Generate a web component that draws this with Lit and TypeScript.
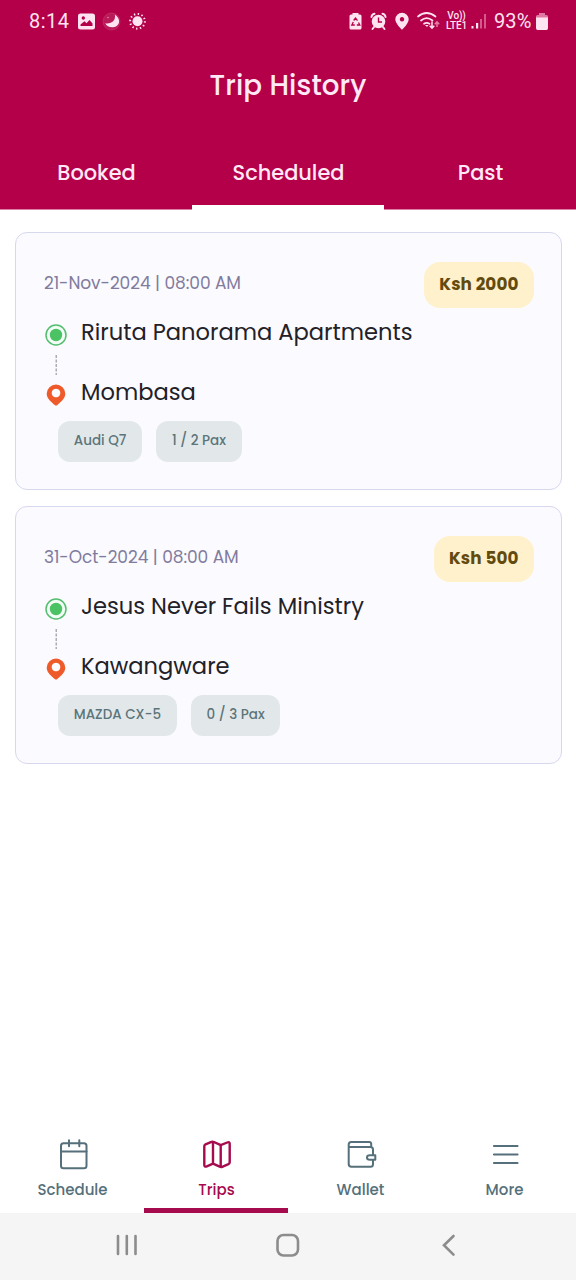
import { LitElement, html, css, svg } from "lit";
import { customElement, property } from "lit/decorators.js";
import { classMap } from "lit/directives/class-map.js";

interface Trip {
  date: string;
  price: string;
  from: string;
  to: string;
  car: string;
  pax: string;
}

const trips: Trip[] = [
  { date: "21-Nov-2024 | 08:00 AM", price: "Ksh 2000", from: "Riruta Panorama Apartments", to: "Mombasa", car: "Audi Q7", pax: "1 / 2 Pax" },
  { date: "31-Oct-2024 | 08:00 AM", price: "Ksh 500", from: "Jesus Never Fails Ministry", to: "Kawangware", car: "MAZDA CX-5", pax: "0 / 3 Pax" },
];

@customElement("status-bar")
class StatusBar extends LitElement {
  static styles = css`
    :host { display: flex; height: 42px; padding: 0 28px 0 29px; box-sizing: border-box; align-items: center; justify-content: space-between; color: #ffe3f1; font-family: Roboto, sans-serif; }
    .left { display: flex; align-items: center; }
    .time { font-size: 20px; line-height: 42px; letter-spacing: 0.5px; width: 49px; }
    svg { display: block; }
    .right { display: flex; align-items: center; }
    .volte { display: flex; flex-direction: column; font-size: 10px; line-height: 9.500px; font-weight: 500; letter-spacing: -0.15px; width: 21px; align-items: center; margin: 0 4px 1px 5px; }
    .pct { font-size: 20px; line-height: 42px; margin-left: 8px; width: 42px; letter-spacing: 0.1px; }
  `;
  render() {
    return html`
      <div class="left">
        <span class="time">8:14</span>
        <svg width="72" height="42" viewBox="78 0 72 42">
          <path fill="#ffe3f1" fill-rule="evenodd" d="M80.500 13.500h12a2.500 2.500 0 0 1 2.500 2.500v11a2.500 2.500 0 0 1-2.500 2.500h-12a2.500 2.500 0 0 1-2.500-2.500v-11a2.500 2.500 0 0 1 2.500-2.500zM80.500 26h12v-2.500l-3-3.500-3 3.300-2-2-4 3.200zM83.300 16.300a1.700 1.700 0 1 0 .01 0z"/>
          <circle cx="111.500" cy="21.500" r="8.500" fill="#ba1a58" stroke="#c53b70" stroke-width=".6"/>
          <path fill="#ffe3f1" d="M114.800 14.500c6.500 4.500 5.500 12-1.800 12.800-3.500.3-6.500-1.300-7.800-4 6 1 11-2.500 9.600-8.800z"/>
          <circle cx="108" cy="17.500" r=".8" fill="#e58bb0"/>
          <circle cx="137.500" cy="21.300" r="5" fill="#ffe3f1"/>
          <circle cx="137.500" cy="21.300" r="7.400" fill="none" stroke="#ffe3f1" stroke-width="2" stroke-dasharray="1.400 2.474"/>
        </svg>
      </div>
      <div class="right">
        <svg width="92" height="42" viewBox="349 0 92 42" fill="none">
          <path fill="#ffe3f1" d="M352.500 13h6v1.500h1.500q1.500 0 1.500 1.500v12q0 1.500-1.500 1.500h-9q-1.500 0-1.500-1.500v-12q0-1.500 1.500-1.500h1.500z"/>
          <path stroke="#b30049" stroke-width="1.300" d="M353.700 20.500l1.800-2.500 2 2.700M358.500 22.500l1.300 2.500h-3M354.800 25h-3l1.500-3"/>
          <circle cx="378.500" cy="21.500" r="6.800" fill="#ffe3f1"/>
          <path stroke="#ffe3f1" stroke-width="2" stroke-linecap="round" d="M371.500 17q.2-2.700 3-3.300M382.500 13.700q2.800.6 3 3.300M374 27l-1.500 2M383 27l1.500 2"/>
          <path stroke="#b30049" stroke-width="1.400" d="M378.500 17.500v4.500h3.500"/>
          <path fill="#ffe3f1" fill-rule="evenodd" d="M402 12.700a6.700 6.700 0 0 1 6.700 6.700c0 4-6.700 10.300-6.700 10.300s-6.700-6.300-6.700-10.300a6.700 6.700 0 0 1 6.700-6.700zM402 17.100a2.200 2.200 0 1 0 .01 0z"/>
          <path stroke="#ffe3f1" stroke-width="1.700" stroke-linecap="round" d="M418 16.500q8.500-7 17.500 0M421 20.500q5.700-4.600 11.500 0M424 23.800q2.700-2 5.500 0"/>
          <path fill="#ffe3f1" d="M425 25h3.500l-1.500 2z"/>
          <path stroke="#ffe3f1" stroke-width="1.500" d="M432 21.500v6.500M429.700 25.800l2.300 2.400 2.300-2.400"/>
          <path stroke="#e47ca5" stroke-width="1.500" d="M437 27v-5M434.800 24.200l2.200-2.400 2.200 2.400"/>
        </svg>
        <div class="volte"><span>Vo))</span><span>LTE1</span></div>
        <svg width="15" height="42" viewBox="470.500 0 15 42">
          <path fill="#ffe3f1" d="M471 26h2v2.500h-2zM475.500 23h2.200v5.500h-2.200z"/>
          <path fill="#d35a8b" d="M479.500 19h2v9.500h-2zM483.500 14h2v14.500h-2z"/>
        </svg>
        <span class="pct">93%</span>
        <svg width="12" height="42" viewBox="536 0 12 42">
          <path fill="#df79a3" d="M539 13h6v2h1.500q1.500 0 1.500 1.500v2h-12v-2q0-1.500 1.500-1.500h1.500z"/>
          <path fill="#ffe3f1" d="M536 17.500h12v10.500q0 2-1.500 2h-9q-1.500 0-1.500-2z"/>
        </svg>
      </div>`;
  }
}

@customElement("trip-card")
class TripCard extends LitElement {
  @property({ attribute: false }) trip!: Trip;
  static styles = css`
    :host { display: block; box-sizing: border-box; height: 258px; border: 1.500px solid #d6d8ee; border-radius: 12px; background: #fbfaff; padding: 28.500px 27px 0 28px; }
    .top { display: flex; justify-content: space-between; align-items: flex-start; height: 46px; }
    .date { font-size: 17px; line-height: 43px; letter-spacing: -0.06px; color: #817c9d; }
    .price { height: 46px; line-height: 44px; box-sizing: border-box; padding: 0 15.500px; border-radius: 16px; background: #fff1cc; color: #624b0c; font-weight: 700; font-size: 16.800px; letter-spacing: 0.1px; }
    .row { display: flex; height: 30px; align-items: center; }
    .first { margin-top: 10px; }
    .icon { width: 37px; flex: none; padding-top: 4px; margin-left: -0.5px; margin-right: 0.5px; box-sizing: border-box; }
    .place { font-size: 22.600px; line-height: 31px; color: #222127; letter-spacing: 0; white-space: nowrap; }
    .link { display: block; width: 24px; height: 30px; }
    svg { display: block; }
    .chips { display: flex; gap: 14px; padding: 13.500px 0 0 14px; }
    .chip { box-sizing: border-box; height: 41px; line-height: 39px; border-radius: 12px; padding: 0 15.800px; background: #e2e8ea; color: #5c757a; font-weight: 500; font-size: 13.500px; letter-spacing: 0; }
  `;
  render() {
    const t = this.trip;
    return html`
      <div class="top"><span class="date">${t.date}</span><span class="price">${t.price}</span></div>
      <div class="row first">
        <span class="icon"><svg width="24" height="24" viewBox="0 0 24 24"><circle cx="12" cy="12" r="10" fill="#f2fdf5" stroke="#55bd70" stroke-width="1.500"/><circle cx="12" cy="12" r="6.200" fill="#4bc263"/></svg></span>
        <span class="place">${t.from}</span>
      </div>
      <svg class="link" viewBox="0 0 24 30"><path d="M12.200 7v20" stroke="#9a999f" stroke-width="1.200" stroke-dasharray="3 1.500"/></svg>
      <div class="row">
        <span class="icon"><svg width="24" height="24" viewBox="0 0 24 24"><path fill="#ee5a29" fill-rule="evenodd" d="M12 1.500a9.300 9.300 0 0 1 9.300 9.200c0 5-5 8.600-8 11.300q-1.300 1.200-2.600 0c-3-2.700-8-6.300-8-11.300A9.300 9.300 0 0 1 12 1.500zM12 5.700a4.300 4.300 0 1 0 .01 0z"/></svg></span>
        <span class="place">${t.to}</span>
      </div>
      <div class="chips"><span class="chip">${t.car}</span><span class="chip">${t.pax}</span></div>`;
  }
}

const navItems = [
  { label: "Schedule", icon: svg`<rect x="5" y="5.300" width="25.500" height="25" rx="2.500"/><path d="M5 13.500h25.500M13 2.200v6M23.300 2.200v6"/>` },
  { label: "Trips", icon: svg`<path stroke-width="2.400" d="M4.300 8.300q0-1.300 1.200-1.900l6-2.500q1.300-.5 2.500.1l6.700 3.200 6.500-2.700q2.500-1 2.500 1.200v18.500q0 1.400-1.300 2l-6.200 2.600q-1.300.5-2.500-.1l-6.700-3-6.200 2.600q-2.500 1-2.500-1.300zM13 4v21.500M20.700 7.500v21"/>` },
  { label: "Wallet", icon: svg`<path d="M29 17v-5.500q0-2.500-2.500-2.500H4.700v17q0 2.800 2.800 2.800h19q2.500 0 2.500-2.500V22M4.700 9V6.500q0-2.500 2.500-2.500h18q2 0 2 2v3"/><path d="M31.300 17.300h-5.500q-2.800 0-2.800 2.200t2.800 2.200h5.500z"/>` },
  { label: "More", icon: svg`<path stroke-width="2.200" d="M6 8h23.500M6 16.500h23.500M6 25h23.500"/>` },
];

@customElement("app-root")
class AppRoot extends LitElement {
  static styles = css`
    :host { display: flex; flex-direction: column; width: 100%; height: 1280px; background: #fff; font-family: Poppins, Inter, sans-serif; }
    header { background: #b30049; height: 209px; flex: none; display: flex; flex-direction: column; color: #ffe9f7; border-bottom: 1px solid #dc82a7; }
    h1 { margin: 0; height: 86px; line-height: 87px; text-align: center; font-size: 27.700px; font-weight: 500; letter-spacing: 0.1px; }
    .tabs { display: grid; grid-template-columns: repeat(3, 1fr); height: 82px; margin-bottom: -1px; }
    .tab { box-sizing: border-box; text-align: center; font-size: 20.900px; font-weight: 500; line-height: 90px; height: 82px; padding-left: 1px; }
    .selected { border-bottom: 5px solid #fff; }
    main { flex: 1; padding: 22px 14px 0 15px; display: flex; flex-direction: column; gap: 16.400px; }
    nav { flex: none; height: 93px; display: grid; grid-template-columns: repeat(4, 1fr); }
    .item { box-sizing: border-box; display: flex; flex-direction: column; align-items: center; color: #55707a; font-size: 15px; font-weight: 500; line-height: 22px; padding: 18px 0 0 1px; }
    .item svg { display: block; margin-bottom: 8px; }
    .current { color: #a50b4d; border-bottom: 5px solid #a50b4d; }
    .system { flex: none; height: 67px; background: #f5f5f5; display: flex; justify-content: center; }
  `;
  render() {
    return html`
      <header>
        <status-bar></status-bar>
        <h1>Trip History</h1>
        <div class="tabs">
          ${["Booked", "Scheduled", "Past"].map((l) => html`<span class=${classMap({ tab: true, selected: l === "Scheduled" })}>${l}</span>`)}
        </div>
      </header>
      <main>${trips.map((t) => html`<trip-card .trip=${t}></trip-card>`)}</main>
      <nav>
        ${navItems.map((n) => html`<div class=${classMap({ item: true, current: n.label === "Trips" })}>
          <svg width="33" height="33" viewBox="0 0 33 33" fill="none" stroke="currentColor" stroke-width="2" stroke-linecap="round" stroke-linejoin="round">${n.icon}</svg>
          <span>${n.label}</span>
        </div>`)}
      </nav>
      <div class="system">
        <svg width="576" height="67" viewBox="0 1213 576 67" fill="none" stroke="#8c8c8c" stroke-width="2.600" stroke-linecap="round">
          <path d="M118 1236v18M126.800 1236v18M135.500 1236v18"/>
          <rect x="277.500" y="1235" width="20.500" height="20.500" rx="6"/>
          <path d="M453.500 1236l-9.500 9.300 9.500 9.300"/>
        </svg>
      </div>`;
  }
}
